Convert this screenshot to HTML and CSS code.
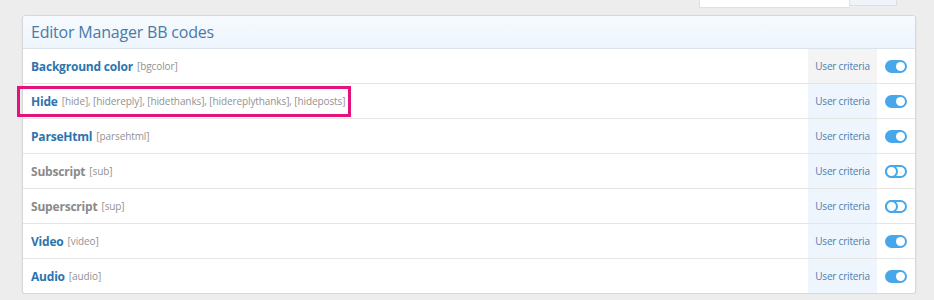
FILE: index.html
```html
<!DOCTYPE html>
<html>
<head>
<meta charset="utf-8">
<link rel="stylesheet" href="styles.css">
</head>
<body>
<div class="page">
  <div class="filter-bar">
    <div class="filter-input">Filter...</div>
    <div class="filter-btn"><span class="filter-icon"></span>Filter</div>
  </div>
  <div class="panel">
    <h2 class="panel-header">Editor Manager BB codes</h2>
    <div class="row">
      <div class="main"><span class="name">Background color</span> <span class="hint">[bgcolor]</span></div>
      <div class="crit crit-hover">User criteria</div>
      <div class="tog"><span class="toggle on"></span></div>
    </div>
    <div class="row">
      <div class="main"><span class="name">Hide</span> <span class="hint">[hide], [hidereply], [hidethanks], [hidereplythanks], [hideposts]</span></div>
      <div class="crit">User criteria</div>
      <div class="tog"><span class="toggle on"></span></div>
      <div class="highlight"></div>
    </div>
    <div class="row">
      <div class="main"><span class="name">ParseHtml</span> <span class="hint">[parsehtml]</span></div>
      <div class="crit">User criteria</div>
      <div class="tog"><span class="toggle on"></span></div>
    </div>
    <div class="row">
      <div class="main"><span class="name off">Subscript</span> <span class="hint">[sub]</span></div>
      <div class="crit">User criteria</div>
      <div class="tog"><span class="toggle"></span></div>
    </div>
    <div class="row">
      <div class="main"><span class="name off">Superscript</span> <span class="hint">[sup]</span></div>
      <div class="crit">User criteria</div>
      <div class="tog"><span class="toggle"></span></div>
    </div>
    <div class="row">
      <div class="main"><span class="name">Video</span> <span class="hint">[video]</span></div>
      <div class="crit">User criteria</div>
      <div class="tog"><span class="toggle on"></span></div>
    </div>
    <div class="row">
      <div class="main"><span class="name">Audio</span> <span class="hint">[audio]</span></div>
      <div class="crit">User criteria</div>
      <div class="tog"><span class="toggle on"></span></div>
    </div>
  </div>
</div>
</body>
</html>
```
FILE: styles.css
```css
html, body {
  margin: 0;
  padding: 0;
  background: #ededed;
  font-family: "Open Sans", "Noto Sans", Arial, sans-serif;
  overflow: hidden;
}
.page {
  width: 894px;
  margin-left: 22px;
}
.filter-bar {
  display: flex;
  justify-content: flex-end;
  margin-top: -19px;
  margin-right: 19px;
  height: 27px;
}
.filter-input {
  height: 25px;
  border: 1px solid #dfdfdf;
  border-right: none;
  background: #fff;
  font-size: 12px;
  color: #bbb;
  line-height: 25px;
  padding-left: 8px;
  box-sizing: content-box;
  width: 141px;
}
.filter-btn {
  width: 48px;
  height: 25px;
  border: 1px solid #dfdfdf;
  background: #eef4fa;
  font-size: 12px;
  color: #555;
  line-height: 25px;
  display: flex;
  align-items: center;
  gap: 5px;
  padding-left: 6px;
  box-sizing: border-box;
}
.filter-icon {
  width: 10px;
  height: 3px;
  background: #4d8ac4;
  display: inline-block;
}
.panel {
  margin-top: 7px;
  background: #fff;
  border: 1px solid #d8d8d8;
  border-radius: 3px;
  box-shadow: 0 1px 2px rgba(0,0,0,0.08);
}
.panel-header {
  margin: 0;
  height: 32px;
  line-height: 32px;
  padding-left: 8px;
  font-weight: normal;
  font-size: 16px;
  color: #4a7aa6;
  background: linear-gradient(to bottom, #f6fafe, #edf5fd);
  border-bottom: 1px solid #dde3ea;
  border-radius: 3px 3px 0 0;
  letter-spacing: -0.2px;
}
.row {
  position: relative;
  display: flex;
  height: 34px;
  border-bottom: 1px solid #e5e5e5;
}
.row:last-child {
  border-bottom: none;
}
.main {
  flex: 1;
  display: flex;
  align-items: center;
  gap: 4px;
  padding-left: 8px;
}
.name {
  font-weight: bold;
  font-size: 12px;
  color: #2c74ad;
  letter-spacing: -0.2px;
}
.name.off {
  color: #8a8a8a;
}
.hint {
  font-size: 10px;
  color: #929292;
  letter-spacing: -0.1px;
}
.crit {
  width: 69px;
  display: flex;
  align-items: center;
  justify-content: center;
  font-size: 10px;
  color: #4b7fb0;
  background: #eef5fd;
  letter-spacing: -0.2px;
}
.crit-hover {
  background: #f4f4f4;
}
.tog {
  width: 38px;
  display: flex;
  align-items: center;
  justify-content: center;
}
.toggle {
  position: relative;
  display: block;
  width: 22px;
  height: 13px;
  border: 2px solid #47a7eb;
  border-radius: 8px;
  box-sizing: border-box;
  background: #fff;
}
.toggle::after {
  content: "";
  position: absolute;
  top: -2px;
  left: -2px;
  width: 13px;
  height: 13px;
  border: 2px solid #47a7eb;
  border-radius: 50%;
  box-sizing: border-box;
  background: #fff;
}
.toggle.on {
  background: #47a7eb;
}
.toggle.on::after {
  left: auto;
  right: 0;
  top: 0;
  width: 9px;
  height: 9px;
  border: none;
}
.highlight {
  position: absolute;
  left: -6px;
  top: 2px;
  width: 334px;
  height: 31px;
  border: 3px solid #e5127d;
  box-sizing: border-box;
}
```
